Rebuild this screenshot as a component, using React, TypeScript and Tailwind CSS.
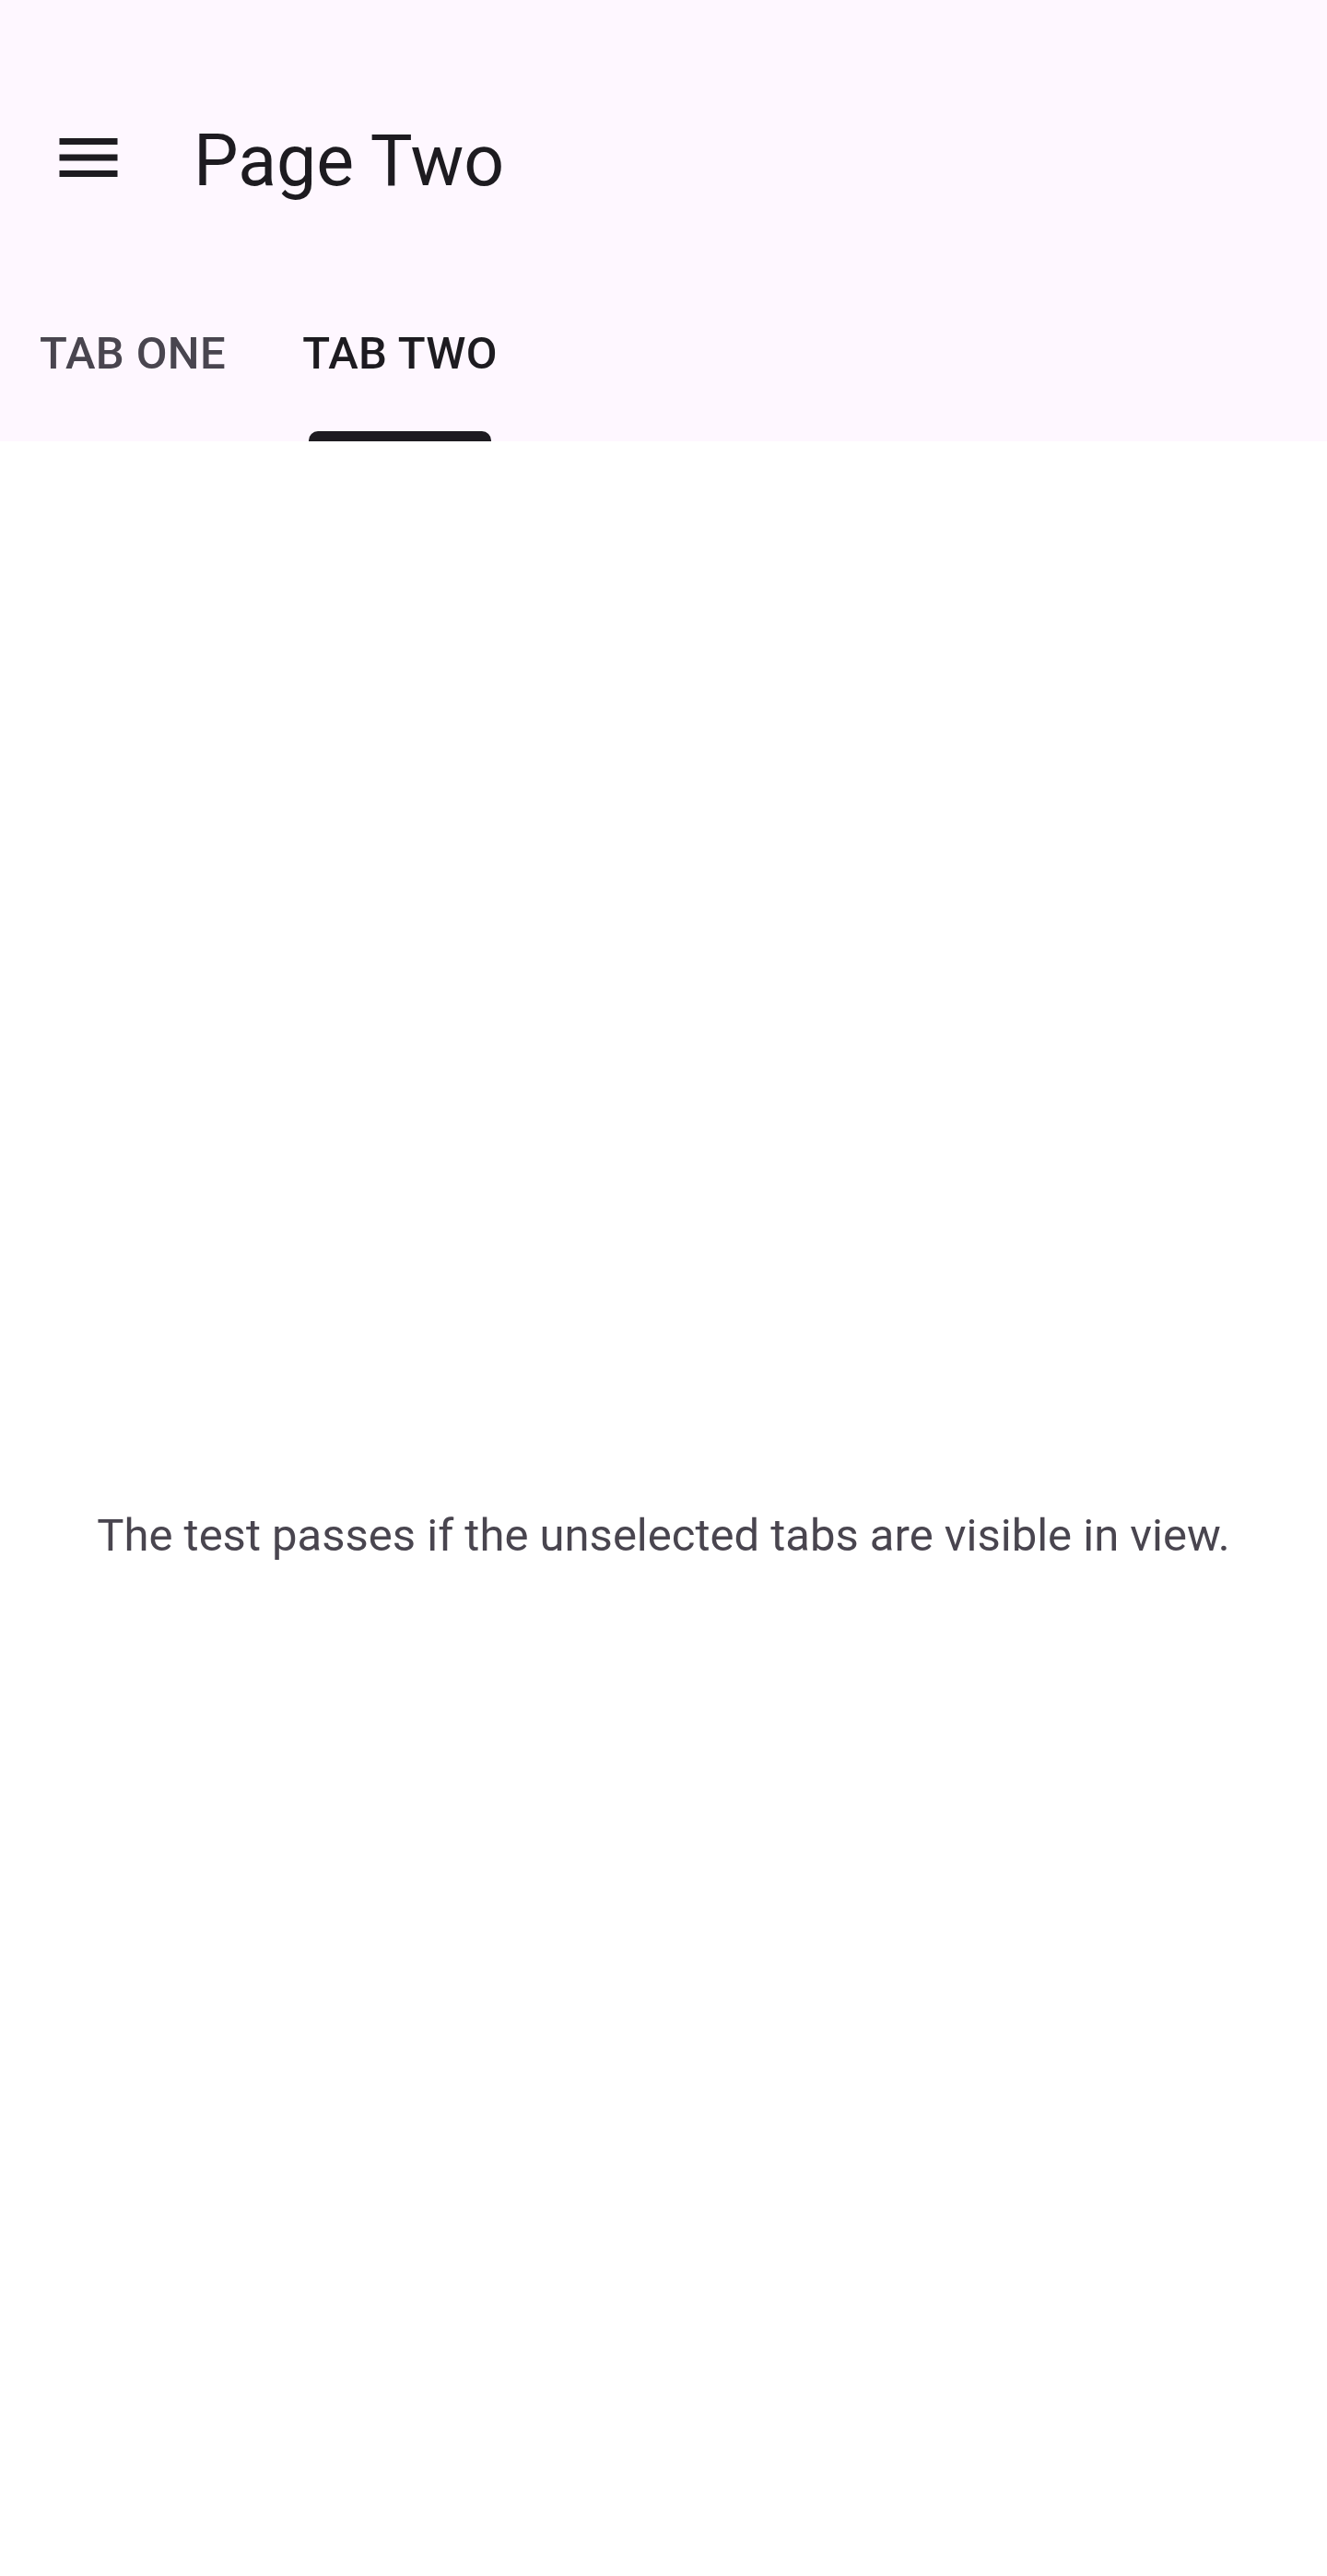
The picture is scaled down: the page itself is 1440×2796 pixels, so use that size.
import React from 'react';

function MenuIcon() {
  return (
    <svg width="84" height="84" viewBox="0 0 24 24" aria-hidden="true">
      <path d="M3 18h18v-2H3v2zm0-5h18v-2H3v2zm0-7v2h18V6H3z" fill="#1d1b20" />
    </svg>
  );
}

function Tab({ label, selected, width }: { label: string; selected?: boolean; width: string }) {
  return (
    <div className={`flex h-full flex-col items-center ${width}`}>
      <span
        className={`pt-[72px] text-[49px] leading-[57px] font-medium tracking-[0.35px] whitespace-nowrap ${
          selected ? 'text-[#1d1b20]' : 'text-[#49454f]'
        }`}
      >
        {label}
      </span>
      <div className="flex-1" />
      <div className={`h-[11px] w-[198px] rounded-t-[10px] ${selected ? 'bg-[#1d1b20]' : 'bg-transparent'}`} />
    </div>
  );
}

export default function App() {
  return (
    <div className="flex min-h-[2796px] w-full flex-col bg-white font-['Roboto','Liberation_Sans',sans-serif]">
      {/* top app bar + tabs */}
      <header className="flex h-[479px] flex-col bg-[#fef7ff] pt-[59px]">
        <div className="flex h-[224px] items-center pl-[54px]">
          <MenuIcon />
          <h1 className="ml-[72px] mt-[8px] text-[77px] leading-[98px] font-normal text-[#1d1b20]">Page Two</h1>
        </div>
        <div className="flex h-[196px] pl-[45px]">
          <Tab label="TAB ONE" width="w-[198px]" />
          <div className="w-[87px]" />
          <Tab label="TAB TWO" selected width="w-[208px]" />
        </div>
      </header>

      {/* content */}
      <main className="flex h-[2317px] items-center justify-center pt-[57px]">
        <p className="text-[49px] leading-[57px] tracking-normal text-[#49454f]">
          The test passes if the unselected tabs are visible in view.
        </p>
      </main>
    </div>
  );
}
